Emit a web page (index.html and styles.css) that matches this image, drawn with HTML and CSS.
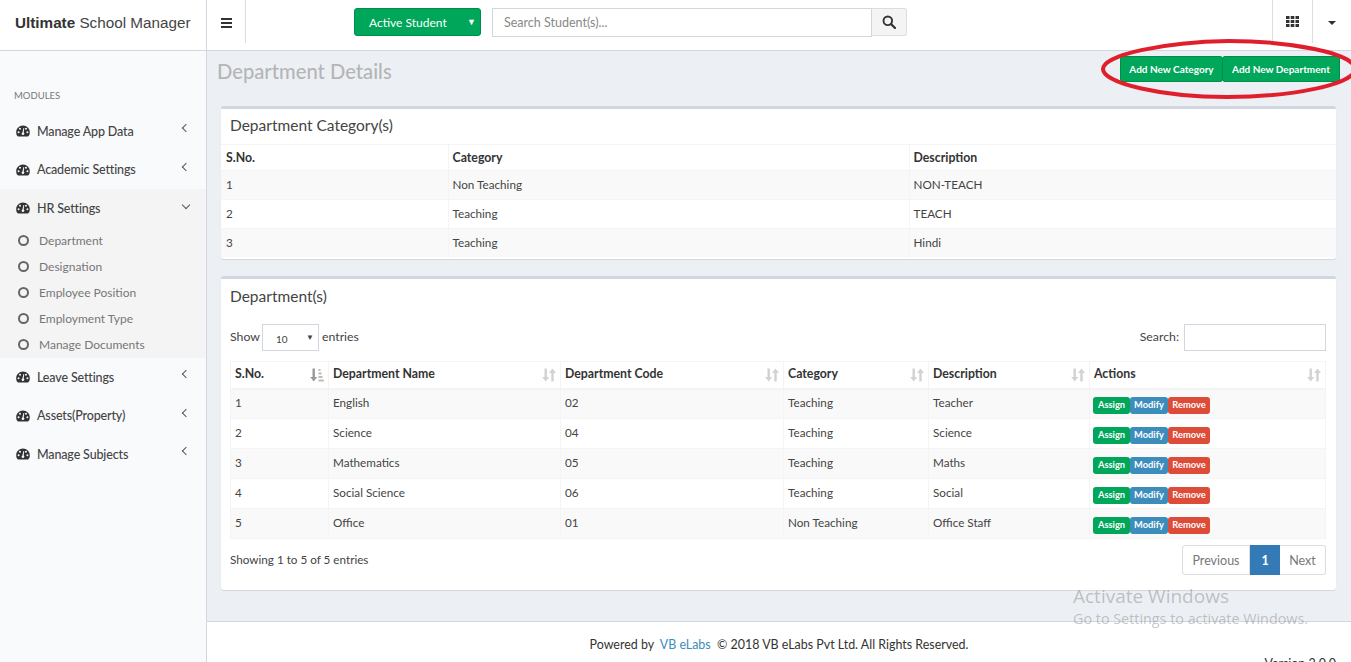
FILE: index.html
```html
<!DOCTYPE html>
<html lang="en">
<head>
<meta charset="utf-8">
<title>Department Details</title>
<link rel="stylesheet" href="styles.css">
</head>
<body>
<svg class="defs" width="0" height="0" aria-hidden="true">
  <symbol id="gauge" viewBox="0 0 14 12">
    <path fill="#333" fill-rule="evenodd" d="M7 0.6C3.2 0.6 0.2 3.6 0.2 7.2c0 1.5 .4 2.9 1.2 3.9.2.3.5.4.8.4h9.6c.3 0 .6-.1.8-.4.8-1 1.2-2.4 1.2-3.9C13.8 3.6 10.8.6 7 .6zM2.6 8.2a1 1 0 1 1 0-2 1 1 0 0 1 0 2zM4 4.8a1 1 0 1 1 0-2 1 1 0 0 1 0 2zM7.3 9.9a1.4 1.4 0 0 1-1.7-1.2c0-.5.3-1 .8-1.2l1-4.3c.1-.3.8-.2.8.2l-.5 4.2c.6.4.8 1 .6 1.5-.1.4-.5.7-1 .8zM10 4.8a1 1 0 1 1 0-2 1 1 0 0 1 0 2zM11.4 8.2a1 1 0 1 1 0-2 1 1 0 0 1 0 2z"/>
  </symbol>
  <symbol id="sort" viewBox="0 0 14 14">
    <path fill="#d2d2d2" d="M2.500 .5h2.400v8.500h2.300L3.700 13.500.2 9h2.300zM10.500.5L14 5h-2.300v8.500H9.300V5H7z"/>
  </symbol>
  <symbol id="sort-asc" viewBox="0 0 14 14">
    <path fill="#999" d="M2.500 .5h2.400v8.500h2.300L3.700 13.500.2 9h2.300z"/>
    <path fill="#bbb" d="M8.500 1h2v2h-2zM8.500 4.500h3v2h-3zM8.500 8h4v2h-4zM8.500 11.500h5.300v2H8.500z"/>
  </symbol>
</svg>

<header class="topbar">
  <div class="brand"><b>Ultimate</b> School Manager</div>
  <div class="toggle"><span class="bars"><i></i><i></i><i></i></span></div>
  <div class="select-btn"><span>Active Student</span><span class="tri">▼</span></div>
  <div class="search-group">
    <div class="search-input">Search Student(s)...</div>
    <div class="search-btn">
      <svg width="14" height="14" viewBox="0 0 14 14"><circle cx="5.800" cy="5.800" r="4.300" fill="none" stroke="#333" stroke-width="1.900"/><path d="M9 9l4 4" stroke="#333" stroke-width="2.300" stroke-linecap="round"/></svg>
    </div>
  </div>
  <div class="top-right">
    <div class="top-cell grid-cell">
      <svg width="13" height="11" viewBox="0 0 13 11"><path fill="#333" d="M0 0h3.500v3H0zM4.700 0h3.600v3H4.700zM9.500 0H13v3H9.500zM0 4h3.500v3H0zM4.700 4h3.600v3H4.700zM9.500 4H13v3H9.500zM0 8h3.500v3H0zM4.700 8h3.600v3H4.700zM9.500 8H13v3H9.500z"/></svg>
    </div>
    <div class="top-cell caret-cell"><span class="caret"></span></div>
  </div>
</header>

<div class="layout">
  <aside class="sidebar">
    <div class="side-label">MODULES</div>
    <nav>
      <div class="nav-item"><svg class="gauge"><use href="#gauge"/></svg><span>Manage App Data</span><em class="chev-left"></em></div>
      <div class="nav-item"><svg class="gauge"><use href="#gauge"/></svg><span>Academic Settings</span><em class="chev-left"></em></div>
      <div class="nav-open">
        <div class="nav-item"><svg class="gauge"><use href="#gauge"/></svg><span>HR Settings</span><em class="chev-down"></em></div>
        <div class="sub-item"><i class="ring"></i>Department</div>
        <div class="sub-item"><i class="ring"></i>Designation</div>
        <div class="sub-item"><i class="ring"></i>Employee Position</div>
        <div class="sub-item"><i class="ring"></i>Employment Type</div>
        <div class="sub-item"><i class="ring"></i>Manage Documents</div>
      </div>
      <div class="nav-item"><svg class="gauge"><use href="#gauge"/></svg><span>Leave Settings</span><em class="chev-left"></em></div>
      <div class="nav-item"><svg class="gauge"><use href="#gauge"/></svg><span>Assets(Property)</span><em class="chev-left"></em></div>
      <div class="nav-item"><svg class="gauge"><use href="#gauge"/></svg><span>Manage Subjects</span><em class="chev-left"></em></div>
    </nav>
  </aside>

  <div class="main">
    <main class="content">
      <div class="page-head">
        <h1>Department Details</h1>
        <div class="head-btns">
          <a class="btn-green first">Add New Category</a>
          <a class="btn-green second">Add New Department</a>
        </div>
      </div>

      <section class="box box-cat">
        <h3 class="box-title">Department Category(s)</h3>
        <table class="tbl-cat">
          <colgroup><col class="c1"><col class="c2"><col></colgroup>
          <thead><tr><th>S.No.</th><th>Category</th><th>Description</th></tr></thead>
          <tbody>
            <tr><td>1</td><td>Non Teaching</td><td>NON-TEACH</td></tr>
            <tr><td>2</td><td>Teaching</td><td>TEACH</td></tr>
            <tr><td>3</td><td>Teaching</td><td>Hindi</td></tr>
          </tbody>
        </table>
      </section>

      <section class="box box-dep">
        <h3 class="box-title">Department(s)</h3>
        <div class="dt-top">
          <div class="dt-len">Show <span class="len-select"><span>10</span><span class="tri-small">▼</span></span> entries</div>
          <div class="dt-search">Search: <span class="search-field"></span></div>
        </div>
        <table class="tbl-dep">
          <colgroup><col class="d1"><col class="d2"><col class="d3"><col class="d4"><col class="d5"><col></colgroup>
          <thead>
            <tr>
              <th>S.No.<svg class="sorti"><use href="#sort-asc"/></svg></th>
              <th>Department Name<svg class="sorti"><use href="#sort"/></svg></th>
              <th>Department Code<svg class="sorti"><use href="#sort"/></svg></th>
              <th>Category<svg class="sorti"><use href="#sort"/></svg></th>
              <th>Description<svg class="sorti"><use href="#sort"/></svg></th>
              <th>Actions<svg class="sorti"><use href="#sort"/></svg></th>
            </tr>
          </thead>
          <tbody>
            <tr><td>1</td><td>English</td><td>02</td><td>Teaching</td><td>Teacher</td><td><div class="acts"><b class="a-g">Assign</b><b class="a-b">Modify</b><b class="a-r">Remove</b></div></td></tr>
            <tr><td>2</td><td>Science</td><td>04</td><td>Teaching</td><td>Science</td><td><div class="acts"><b class="a-g">Assign</b><b class="a-b">Modify</b><b class="a-r">Remove</b></div></td></tr>
            <tr><td>3</td><td>Mathematics</td><td>05</td><td>Teaching</td><td>Maths</td><td><div class="acts"><b class="a-g">Assign</b><b class="a-b">Modify</b><b class="a-r">Remove</b></div></td></tr>
            <tr><td>4</td><td>Social Science</td><td>06</td><td>Teaching</td><td>Social</td><td><div class="acts"><b class="a-g">Assign</b><b class="a-b">Modify</b><b class="a-r">Remove</b></div></td></tr>
            <tr><td>5</td><td>Office</td><td>01</td><td>Non Teaching</td><td>Office Staff</td><td><div class="acts"><b class="a-g">Assign</b><b class="a-b">Modify</b><b class="a-r">Remove</b></div></td></tr>
          </tbody>
        </table>
        <div class="dt-bottom">
          <div class="dt-info">Showing 1 to 5 of 5 entries</div>
          <div class="pager"><span class="prev">Previous</span><span class="cur">1</span><span class="next">Next</span></div>
        </div>
      </section>
    </main>
    <footer class="footer">
      <div class="powered">Powered by &nbsp;<span class="link">VB eLabs</span>&nbsp; © 2018 VB eLabs Pvt Ltd. All Rights Reserved.</div>
      <div class="version">Version 2.0.0</div>
    </footer>
  </div>
</div>

<svg class="ring-mark" width="250" height="62" viewBox="0 0 250 62" aria-hidden="true">
  <path d="M2 31C2 17 62 4 128 3c60 0 126 12 126 28 0 15-62 28-128 28C60 59 2 45 2 31z" fill="none" stroke="#e01f2d" stroke-width="4"/>
</svg>
<div class="activate">
  <div class="act-1">Activate Windows</div>
  <div class="act-2">Go to Settings to activate Windows.</div>
</div>
</body>
</html>
```
FILE: styles.css
```css
* { box-sizing: border-box; }
html, body { margin: 0; height: 662px; overflow: hidden; }
body {
  position: relative;
  font-family: Lato, "Open Sans", sans-serif;
  font-size: 12.500px;
  color: #444;
  background: #ecf0f5;
}
.defs { position: absolute; }

/* top bar */
.topbar {
  height: 51px;
  display: flex;
  background: #fff;
  border-bottom: 1px solid #d2d6de;
}
.brand {
  width: 207px;
  padding: 13px 0 0 15px;
  border-right: 1px solid #d2d6de;
  font: 15.250px/20px "Liberation Sans", sans-serif;
  color: #444;
}
.brand b { color: #333; }
.toggle {
  width: 39px;
  height: 43px;
  border-right: 1px solid #ddd;
  display: flex;
  justify-content: center;
  padding-top: 18px;
}
.bars i { display: block; width: 11px; height: 2px; background: #333; margin-bottom: 2px; }
.select-btn {
  width: 127px;
  height: 28px;
  margin: 8px 0 0 108px;
  padding: 0 4px 0 14px;
  background: #00a65a;
  border: 1px solid #008d4c;
  border-radius: 3px;
  color: #fff;
  font-size: 12px;
  display: flex;
  justify-content: space-between;
  align-items: center;
}
.tri { font-size: 9px; position: relative; top: -1px; }
.search-group { display: flex; margin: 8px 0 0 11px; height: 29px; }
.search-input {
  width: 380px;
  border: 1px solid #d2d6de;
  padding: 0 11px;
  line-height: 27px;
  color: #888;
  font-size: 12.500px;
}
.search-btn {
  width: 35px;
  height: 28px;
  background: #f4f4f4;
  border: 1px solid #ddd;
  border-left: 0;
  border-radius: 0 3px 3px 0;
  display: flex;
  align-items: center;
  justify-content: center;
}
.top-right { margin-left: auto; display: flex; }
.top-cell { height: 43px; display: flex; align-items: center; justify-content: center; border-left: 1px solid #ddd; }
.grid-cell { width: 40px; padding-bottom: 1px; }
.caret-cell { width: 39px; padding-top: 3px; }
.caret { border-top: 4px solid #333; border-left: 4px solid transparent; border-right: 4px solid transparent; }

/* layout */
.layout { display: flex; height: 630px; }
.sidebar {
  width: 207px;
  flex: none;
  background: #f9fafc;
  border-right: 1px solid #d2d6de;
}
.side-label { padding: 39px 0 0 14px; height: 61px; font-size: 9.500px; color: #777; }
.nav-item {
  height: 38.500px;
  display: flex;
  align-items: center;
  padding: 0 17px 0 16px;
  font-size: 12.500px;
  letter-spacing: -.15px;
  font-weight: 500;
  color: #444;
}
.gauge { width: 14px; height: 12px; margin-right: 7px; flex: none; }
.chev-left, .chev-down { margin-left: auto; width: 6px; height: 6px; border-left: 1px solid #555; border-bottom: 1px solid #555; }
.chev-left { transform: rotate(45deg); margin-top: -6px; }
.chev-down { transform: rotate(-45deg); margin-top: -6px; }
.nav-open { background: #f4f4f5; height: 169px; }
.sub-item {
  height: 26px;
  display: flex;
  align-items: center;
  padding-left: 18px;
  font-size: 12px;
  color: #777;
}
.ring { width: 11px; height: 11px; border: 2px solid #666; border-radius: 50%; margin-right: 10px; }

.main { flex: 1; min-width: 0; display: flex; flex-direction: column; }
.content { height: 570px; flex: none; padding: 0 15px 0 14px; }
.page-head { height: 55px; display: flex; justify-content: space-between; margin: 0 -4px 0 -4px; padding-top: 5px; }
h1 { margin: 0; padding-top: 2px; font-size: 20.200px; line-height: 26px; font-weight: 500; color: #b5b5b5; }
.head-btns { display: flex; }
.btn-green {
  height: 26px;
  background: #00a65a;
  border: 1px solid #008d4c;
  border-radius: 3px;
  color: #fff;
  font-size: 10px;
  font-weight: 700;
  line-height: 25px;
  text-align: center;
}
.first { width: 103px; }
.second { width: 118px; margin-left: -1px; }

.box {
  background: #fff;
  border-top: 3px solid #d2d6de;
  border-radius: 3px;
  box-shadow: 0 1px 1px rgba(0,0,0,.1);
}
.box-cat { height: 153px; margin-bottom: 17px; }
.box-dep { height: 314px; padding: 0 10px 0 9px; }
.box-title { margin: 0; font-size: 15.500px; font-weight: 400; color: #444; }
.box-cat .box-title { height: 36px; padding: 6px 0 0 9px; line-height: 20px; border-bottom: 1px solid #f4f4f4; }
.box-dep .box-title { height: 45px; padding-top: 7px; line-height: 20px; }

table { width: 100%; border-collapse: collapse; table-layout: fixed; }
th { text-align: left; font-weight: 700; color: #333; }
tbody tr:nth-child(odd) { background: #f9f9f9; }
.tbl-cat th, .tbl-cat td { padding: 0 4px; border-left: 1px solid #f4f4f4; font-size: 11.700px; }
.tbl-cat td { padding-bottom: 2px; }
.tbl-cat th { font-size: 12.300px; }
.tbl-cat th:first-child, .tbl-cat td:first-child { border-left: 0; padding-left: 5px; }
.tbl-cat thead tr { height: 25px; }
.tbl-cat tbody tr { height: 29px; border-top: 1px solid #f4f4f4; }
.c1 { width: 227px; }
.c2 { width: 461px; }

.dt-top { display: flex; justify-content: space-between; height: 27px; margin-bottom: 10px; font-size: 12.300px; line-height: 25px; }
.dt-len { display: flex; align-items: flex-start; gap: 1px; }
.len-select {
  width: 57px;
  height: 27px;
  border: 1px solid #d2d6de;
  margin: 0 2px 0 1px;
  padding: 3px 4px 0 13px;
  font-size: 10px;
  display: flex;
  justify-content: space-between;
  align-items: center;
}
.tri-small { font-size: 8px; margin-top: -4px; color: #444; }
.dt-search { display: flex; align-items: flex-start; gap: 5px; }
.search-field { width: 142px; height: 27px; border: 1px solid #d2d6de; display: block; }

.tbl-dep th, .tbl-dep td { padding: 0 4px 2px; border: 1px solid #f4f4f4; font-size: 11.700px; }
.tbl-dep td { padding-bottom: 4px; }
.tbl-dep th { position: relative; height: 27px; font-size: 12.300px; border-bottom: 2px solid #f4f4f4; }
.tbl-dep tbody tr { height: 30px; }
.sorti { position: absolute; right: 4px; top: 6px; width: 14px; height: 14px; }
.d1 { width: 98px; }
.d2 { width: 232px; }
.d3 { width: 223px; }
.d4 { width: 145px; }
.d5 { width: 161px; }
.acts { display: flex; height: 17px; margin: 7px 0 0 -1px; }
.acts b {
  color: #fff;
  font-size: 9.300px;
  line-height: 16px;
  text-align: center;
  border-radius: 3px;
}
.a-g { width: 37px; background: #00a65a; }
.a-b { width: 38px; background: #3c8dbc; }
.a-r { width: 42px; background: #dd4b39; }

.dt-bottom { display: flex; justify-content: space-between; margin-top: 6px; }
.dt-info { padding-top: 7px; font-size: 11.700px; }
.pager { display: flex; height: 30px; line-height: 29px; text-align: center; color: #777; font-size: 12.500px; }
.pager span { border: 1px solid #ddd; }
.prev { width: 68px; border-radius: 3px 0 0 3px; }
.cur { width: 30px; background: #337ab7; border-color: #337ab7 !important; color: #fff; font-weight: 700; }
.next { width: 46px; border-left: 0 !important; border-radius: 0 3px 3px 0; }

.footer { height: 60px; flex: none; background: #fff; border-top: 1px solid #d2d6de; position: relative; color: #333; font-size: 12.450px; }
.powered { padding-top: 14px; text-align: center; line-height: 17px; }
.link { color: #3c8dbc; }
.version { position: absolute; right: 15px; top: 33px; line-height: 17px; }

/* overlays drawn over the screenshot */
.ring-mark { position: absolute; left: 1101px; top: 38px; overflow: visible; }
.activate { position: absolute; left: 1073px; top: 584px; color: rgba(120,120,120,.42); font-family: "Open Sans", sans-serif; }
.act-1 { font-size: 19px; line-height: 24px; }
.act-2 { font-size: 14.350px; line-height: 21px; }
```
